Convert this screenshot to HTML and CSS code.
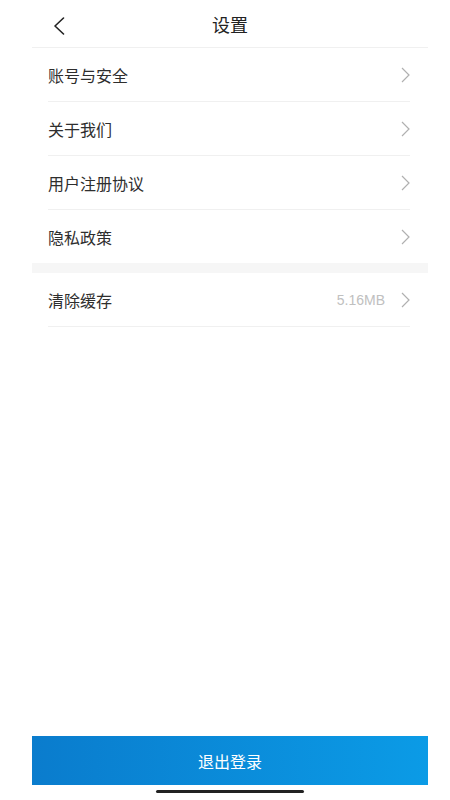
FILE: index.html
```html
<!DOCTYPE html>
<html lang="zh-CN">
<head>
<meta charset="utf-8">
<meta name="viewport" content="width=450">
<title>设置</title>
<link rel="stylesheet" href="styles.css">
</head>
<body>
<div class="page">
  <header class="header">
    <span class="back">
      <svg width="12" height="18" viewBox="0 0 12 18"><path d="M10.5 1 L2 9 L10.5 17" fill="none" stroke="#222" stroke-width="1.6" stroke-linecap="round" stroke-linejoin="round"/></svg>
    </span>
    <h1 class="title">设置</h1>
  </header>
  <ul class="list">
    <li class="row"><span class="label">账号与安全</span><span class="right"><svg class="chev" width="9" height="16" viewBox="0 0 9 16"><path d="M1 1 L8 8 L1 15" fill="none" stroke="#b0b0b0" stroke-width="1.2"/></svg></span></li>
    <li class="row"><span class="label">关于我们</span><span class="right"><svg class="chev" width="9" height="16" viewBox="0 0 9 16"><path d="M1 1 L8 8 L1 15" fill="none" stroke="#b0b0b0" stroke-width="1.2"/></svg></span></li>
    <li class="row"><span class="label">用户注册协议</span><span class="right"><svg class="chev" width="9" height="16" viewBox="0 0 9 16"><path d="M1 1 L8 8 L1 15" fill="none" stroke="#b0b0b0" stroke-width="1.2"/></svg></span></li>
    <li class="row last"><span class="label">隐私政策</span><span class="right"><svg class="chev" width="9" height="16" viewBox="0 0 9 16"><path d="M1 1 L8 8 L1 15" fill="none" stroke="#b0b0b0" stroke-width="1.2"/></svg></span></li>
  </ul>
  <div class="band"></div>
  <ul class="list">
    <li class="row"><span class="label">清除缓存</span><span class="right"><span class="value">5.16MB</span><svg class="chev" width="9" height="16" viewBox="0 0 9 16"><path d="M1 1 L8 8 L1 15" fill="none" stroke="#b0b0b0" stroke-width="1.2"/></svg></span></li>
  </ul>
  <div class="spacer"></div>
  <button class="logout">退出登录</button>
  <div class="home"><span class="home-bar"></span></div>
</div>
</body>
</html>
```
FILE: styles.css
```css
html, body {
  margin: 0;
  padding: 0;
  background: #fff;
}
body {
  font-family: "Noto Sans CJK SC", "Noto Sans", sans-serif;
  color: #333;
}
.page {
  width: 396px;
  height: 800px;
  margin: 0 22px 0 32px;
  display: flex;
  flex-direction: column;
  box-sizing: border-box;
}
.header {
  height: 47px;
  border-bottom: 1px solid #f0f0f0;
  display: flex;
  align-items: center;
  justify-content: center;
  position: relative;
}
.back {
  position: absolute;
  left: 21px;
  top: 17px;
  display: flex;
}
.title {
  margin: 0;
  font-size: 18px;
  font-weight: 400;
  color: #222;
}
.list {
  list-style: none;
  margin: 0;
  padding: 0 18px 0 16px;
}
.row {
  height: 53px;
  border-bottom: 1px solid #f0f0f0;
  display: flex;
  align-items: center;
  justify-content: space-between;
}
.row.last {
  border-bottom: none;
}
.label {
  font-size: 16px;
  color: #2e2e2e;
}
.right {
  display: flex;
  align-items: center;
  gap: 16px;
}
.value {
  font-family: "Liberation Sans", Arial, sans-serif;
  font-size: 14px;
  color: #c0c0c0;
}
.chev {
  display: block;
}
.band {
  height: 10px;
  background: #f6f6f6;
}
.spacer {
  flex: 1;
}
.logout {
  height: 49px;
  border: none;
  margin: 0;
  padding: 0;
  width: 100%;
  background: linear-gradient(90deg, #0a7ccd, #0b9be6);
  color: #fff;
  font-family: "Noto Sans CJK SC", "Noto Sans", sans-serif;
  font-size: 16px;
}
.home {
  height: 15px;
  display: flex;
  justify-content: center;
  padding-top: 5px;
  box-sizing: border-box;
}
.home-bar {
  width: 148px;
  height: 3px;
  border-radius: 2px;
  background: #222;
}
```
